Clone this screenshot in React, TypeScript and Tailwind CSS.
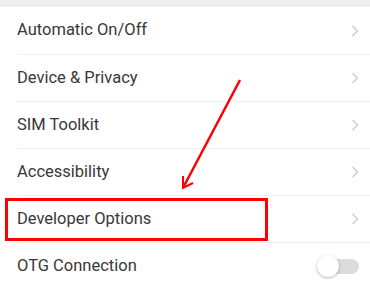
import React from "react";

type Row = { label: string; toggle?: boolean };

const rows: Row[] = [
  { label: "Automatic On/Off" },
  { label: "Device & Privacy" },
  { label: "SIM Toolkit" },
  { label: "Accessibility" },
  { label: "Developer Options" },
  { label: "OTG Connection", toggle: true },
];

function Chevron() {
  return (
    <svg width="8" height="12" viewBox="0 0 8 12" fill="none">
      <path d="M1.5 1l5 5-5 5" stroke="#c8c8c8" strokeWidth="1.2" />
    </svg>
  );
}

function Toggle() {
  return (
    <div className="relative w-[42px] h-[22px] flex items-center">
      <div className="ml-[8px] w-[34px] h-[15px] rounded-full bg-[#dcdcdc]" />
      <div className="absolute left-0 top-0 w-[22px] h-[22px] rounded-full bg-white shadow-[0_1px_3px_rgba(0,0,0,0.3)]" />
    </div>
  );
}

export default function App() {
  return (
    <div className="relative w-[370px] h-[282px] overflow-hidden bg-white font-['Roboto',sans-serif]">
      <div className="h-[7px] bg-[#efefef]" />
      <div className="flex flex-col pl-[17px]">
        {rows.map((row, i) => (
          <div
            key={row.label}
            className={`flex items-center justify-between h-[47px] pr-[11px] ${
              i > 0 ? "border-t border-[#f0f0f0]" : ""
            }`}
          >
            <span className="text-[16.5px] text-[#383838]">{row.label}</span>
            {row.toggle ? <Toggle /> : <Chevron />}
          </div>
        ))}
      </div>

      {/* annotation */}
      <div className="absolute left-[5px] top-[198px] w-[263px] h-[43px] border-[3px] border-[#ff0000]" />
      <svg className="absolute left-0 top-0" width="370" height="282">
        <line x1="240" y1="80" x2="184" y2="186" stroke="#ff0000" strokeWidth="2.5" />
        <path d="M183 176 L183 188 L193 183" stroke="#ff0000" strokeWidth="2" fill="none" />
      </svg>
    </div>
  );
}
